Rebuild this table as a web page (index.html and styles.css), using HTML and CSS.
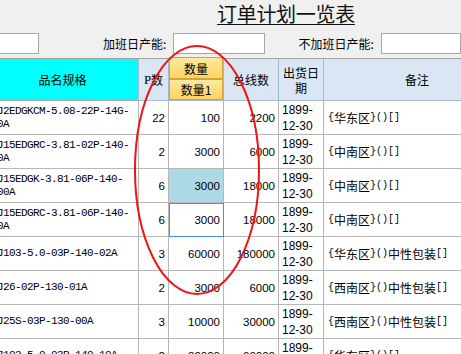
FILE: index.html
```html
<!DOCTYPE html>
<html>
<head>
<meta charset="utf-8">
<link rel="stylesheet" href="styles.css">
</head>
<body>
<div class="page">
  <div class="top">
    <div class="title-row"><span class="title">订单计划一览表</span></div>
    <div class="form-row">
      <input class="box box-a" type="text">
      <span class="lbl lbl-a">加班日产能:</span>
      <input class="box box-b" type="text">
      <span class="lbl lbl-b">不加班日产能:</span>
      <input class="box box-c" type="text">
    </div>
  </div>
  <div class="grid">
    <div class="hd hd-name">品名规格</div>
    <div class="hd"><span class="serif">P</span>数</div>
    <div class="hd hd-qty"><div class="golds"><div class="gold g1">数量</div><div class="gold g2">数量1</div></div></div>
    <div class="hd">总线数</div>
    <div class="hd hd-date">出货日期</div>
    <div class="hd">备注</div>

    <div class="c name">J2EDGKCM-5.08-22P-14G-<br>0A</div>
    <div class="c num">22</div>
    <div class="c num">100</div>
    <div class="c num">2200</div>
    <div class="c date">1899-<br>12-30</div>
    <div class="c note"><span class="a">{</span>华东区<span class="a">}()[]</span></div>

    <div class="c name">J15EDGRC-3.81-02P-140-<br>0A</div>
    <div class="c num">2</div>
    <div class="c num">3000</div>
    <div class="c num">6000</div>
    <div class="c date">1899-<br>12-30</div>
    <div class="c note"><span class="a">{</span>中南区<span class="a">}()[]</span></div>

    <div class="c name">J15EDGK-3.81-06P-140-<br>00A</div>
    <div class="c num">6</div>
    <div class="c num hl">3000</div>
    <div class="c num">18000</div>
    <div class="c date">1899-<br>12-30</div>
    <div class="c note"><span class="a">{</span>中南区<span class="a">}()[]</span></div>

    <div class="c name">J15EDGRC-3.81-06P-140-<br>0A</div>
    <div class="c num">6</div>
    <div class="c num focus">3000</div>
    <div class="c num">18000</div>
    <div class="c date">1899-<br>12-30</div>
    <div class="c note"><span class="a">{</span>中南区<span class="a">}()[]</span></div>

    <div class="c name">J103-5.0-03P-140-02A</div>
    <div class="c num">3</div>
    <div class="c num">60000</div>
    <div class="c num">180000</div>
    <div class="c date">1899-<br>12-30</div>
    <div class="c note"><span class="a">{</span>华东区<span class="a">}()</span>中性包装<span class="a">[]</span></div>

    <div class="c name">J26-02P-130-01A</div>
    <div class="c num">2</div>
    <div class="c num">3000</div>
    <div class="c num">6000</div>
    <div class="c date">1899-<br>12-30</div>
    <div class="c note"><span class="a">{</span>西南区<span class="a">}()</span>中性包装<span class="a">[]</span></div>

    <div class="c name">J25S-03P-130-00A</div>
    <div class="c num">3</div>
    <div class="c num">10000</div>
    <div class="c num">30000</div>
    <div class="c date">1899-<br>12-30</div>
    <div class="c note"><span class="a">{</span>西南区<span class="a">}()</span>中性包装<span class="a">[]</span></div>

    <div class="c name">J103-5.0-03P-140-10A</div>
    <div class="c num">2</div>
    <div class="c num">30000</div>
    <div class="c num">60000</div>
    <div class="c date">1899-<br>12-30</div>
    <div class="c note"><span class="a">{</span>华东区<span class="a">}()[]</span></div>
  </div>
  <svg class="mark" width="461" height="354" viewBox="0 0 461 354">
    <ellipse cx="197" cy="170" rx="62" ry="124" fill="none" stroke="#ee1414" stroke-width="2"/>
  </svg>
</div>
</body>
</html>
```

FILE: styles.css
```css
html, body {
  margin: 0;
  padding: 0;
  background: #ffffff;
}
.page {
  position: relative;
  width: 461px;
  height: 354px;
  overflow: hidden;
  font-family: "Noto Sans CJK SC", sans-serif;
  font-size: 12px;
  color: #000;
  background: #fff;
}
.top {
  height: 58px;
  background: #f0f0f0;
}
.title-row {
  height: 33px;
  padding-left: 217px;
  box-sizing: border-box;
  padding-top: 3px;
}
.title {
  font-size: 20px;
  line-height: 22px;
  letter-spacing: -0.3px;
  text-decoration: underline;
  text-underline-offset: 2px;
  text-decoration-thickness: 1px;
  color: #111;
}
.form-row {
  display: flex;
  align-items: center;
  height: 21px;
}
.box {
  box-sizing: border-box;
  height: 21px;
  margin: 0;
  padding: 0;
  border: 1px solid #a7a7a7;
  background: #fff;
  outline: none;
}
.box-a {
  margin-left: -3px;
  width: 42px;
}
.lbl {
  display: inline-block;
  font-size: 12px;
  line-height: 21px;
  white-space: nowrap;
}
.lbl-a {
  margin-left: 64px;
  width: 75px;
}
.box-b {
  width: 92px;
}
.lbl-b {
  margin-left: 34px;
  width: 89px;
}
.box-c {
  width: 80px;
}
.grid {
  display: grid;
  grid-template-columns: 152px 30px 55px 55px 45px 187px;
  grid-template-rows: 42px repeat(8, 34px);
  margin-left: -13px;
  border-top: 1px solid #a3a3a3;
  width: 524px;
}
.hd {
  background: #dae6f3;
  border-right: 1px solid #a4b9d0;
  border-bottom: 1px solid #a4b9d0;
  display: flex;
  align-items: center;
  justify-content: center;
  text-align: center;
  font-size: 12px;
  line-height: 15px;
}
.hd-name {
  background: #00ffff;
  border-bottom-color: #a8a8a8;
}
.serif {
  font-family: "Liberation Serif", serif;
  font-size: 13px;
}
.hd-qty {
  align-items: flex-start;
}
.golds {
  margin-top: -2px;
  width: 100%;
  display: flex;
  flex-direction: column;
}
.gold {
  box-sizing: border-box;
  border: 1px solid #d3a23c;
  background: linear-gradient(#fee9a2, #fdd35d);
  display: flex;
  align-items: center;
  justify-content: center;
}
.g1 { height: 22px; }
.g2 { height: 21px; }
.hd-date {
  padding: 0 3px;
}
.c {
  background: #fff;
  border-right: 1px solid #b7b7b7;
  border-bottom: 1px solid #b7b7b7;
  display: flex;
  align-items: center;
  overflow: hidden;
  white-space: nowrap;
}
.name {
  padding-left: 10px;
  font-family: "Liberation Mono", monospace;
  font-size: 11px;
  letter-spacing: -0.6px;
  line-height: 13px;
}
.num {
  justify-content: flex-end;
  padding-right: 3px;
  font-family: "Liberation Sans", sans-serif;
  font-size: 11.5px;
}
.hl {
  background: #add8e6;
}
.focus {
  outline: 1px solid #3f92e8;
  outline-offset: -1px;
}
.date {
  align-items: flex-start;
  padding: 1px 0 0 3px;
  font-family: "Liberation Sans", sans-serif;
  font-size: 12px;
  line-height: 16px;
}
.note {
  padding-left: 4px;
  font-family: "Noto Sans CJK SC", sans-serif;
  font-size: 12px;
}
.a {
  font-family: "Liberation Mono", monospace;
  font-size: 10px;
}
.mark {
  position: absolute;
  left: 0;
  top: 0;
  pointer-events: none;
}
```
